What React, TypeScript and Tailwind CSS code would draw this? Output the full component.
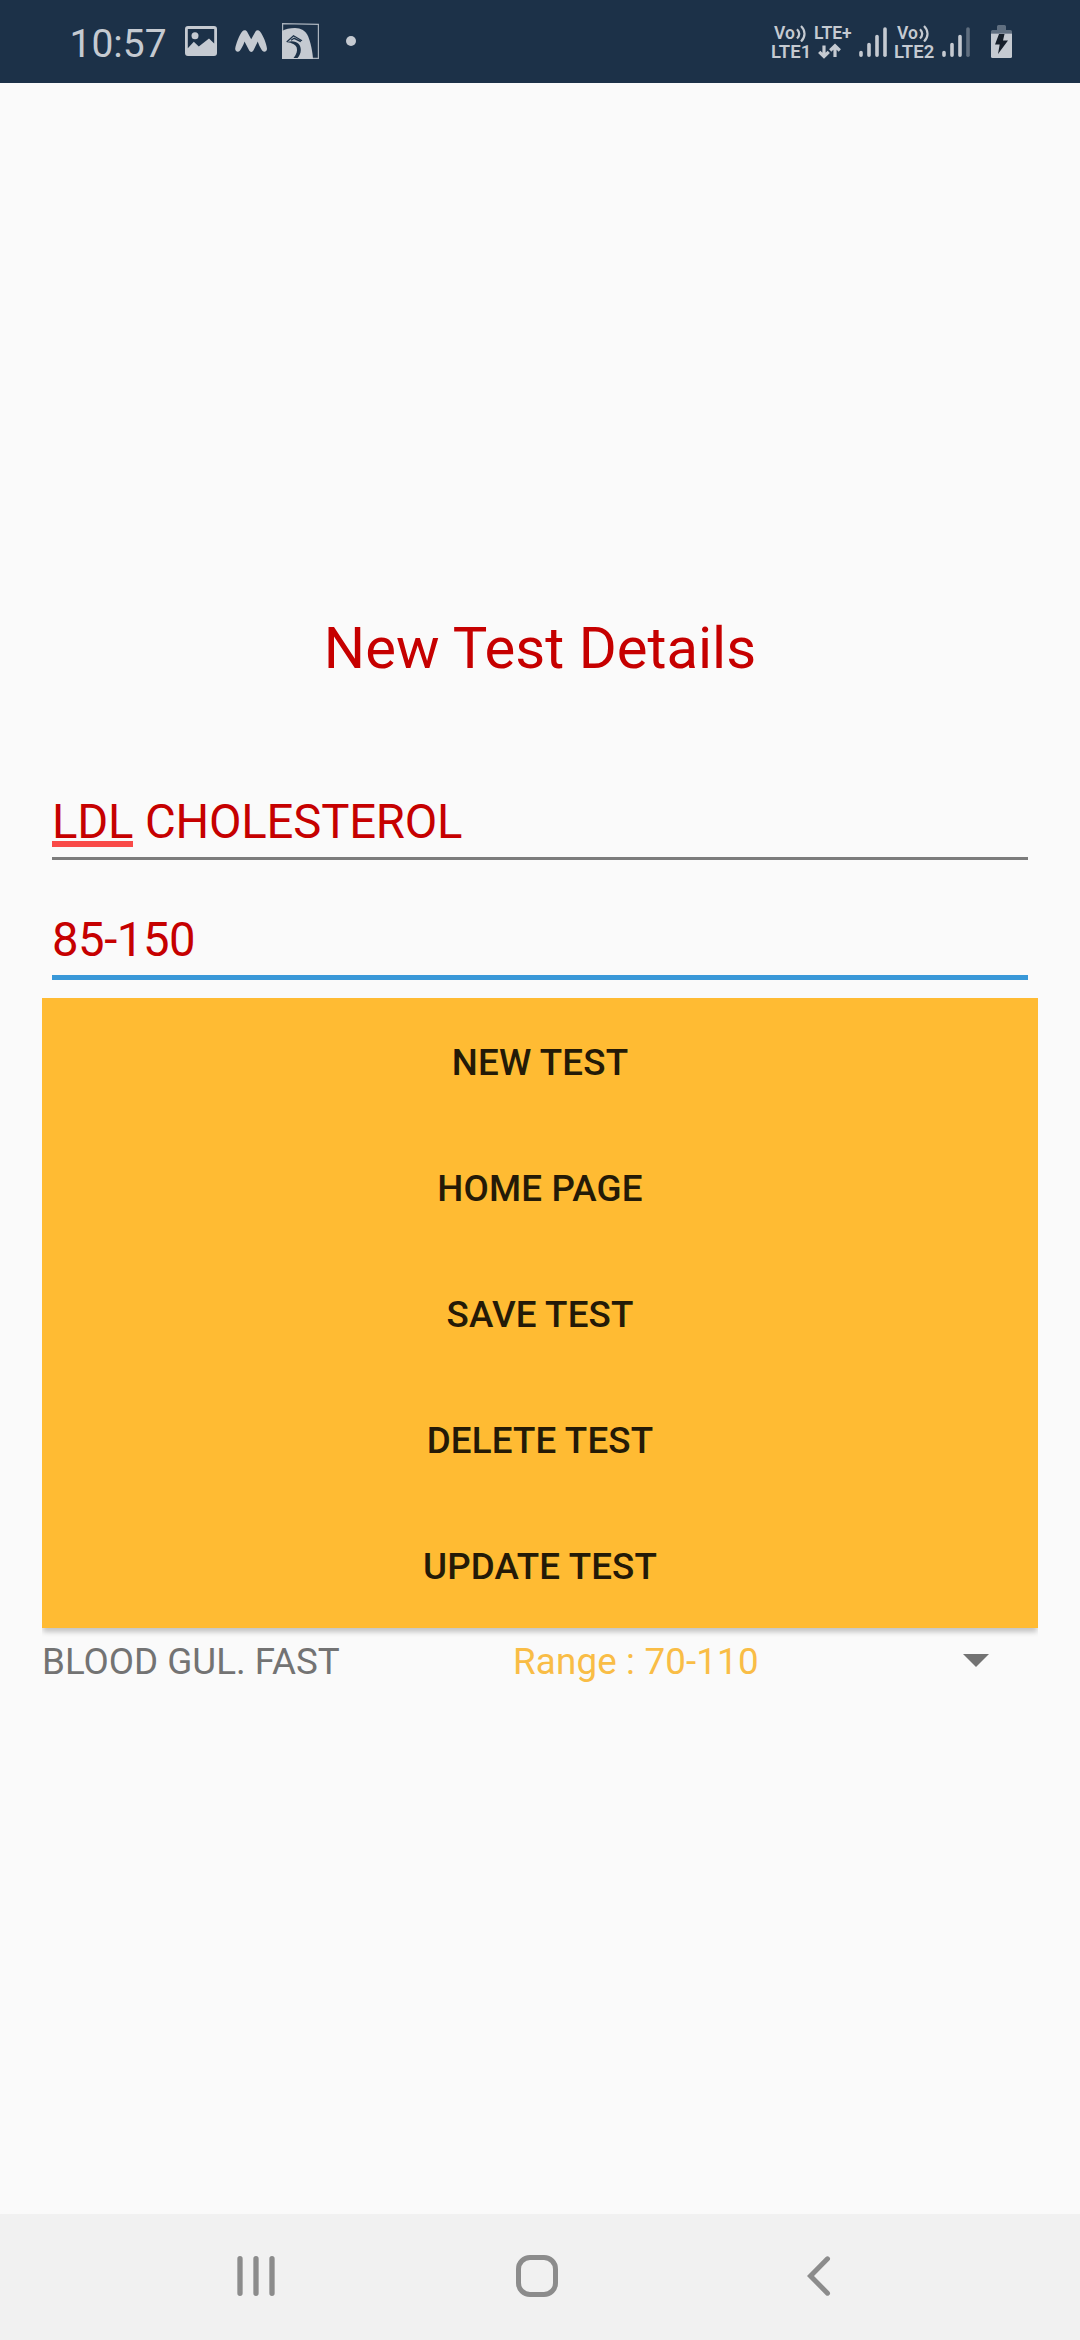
const actions = ['NEW TEST', 'HOME PAGE', 'SAVE TEST', 'DELETE TEST', 'UPDATE TEST'];

function PictureIcon() {
  return (
    <svg className="mt-[26px] ml-[19px] h-[30px] w-8 shrink-0" viewBox="0 0 32 30" fill="#c5cad1">
      <path fillRule="evenodd" d="M3 0h26a3 3 0 0 1 3 3v24a3 3 0 0 1-3 3H3a3 3 0 0 1-3-3V3a3 3 0 0 1 3-3Zm-.2 3v19.200l6-6.400 5 4.800L24 12.500l5.200 5V3Z" />
      <circle cx="10" cy="9.700" r="3.500" />
    </svg>
  );
}

function WaveIcon() {
  return (
    <svg className="mt-[30px] ml-[18px] h-[22px] w-8 shrink-0" viewBox="0 0 32 22" fill="#c5cad1">
      <path d="M.2 18.800C.8 14.500 4.300 5 7.200 1.600 8.600-.2 10.800-.2 12 1.600l4.200 7.600 4.300-7.700c1-1.700 3.200-1.700 4.500 0C28.500 6 31.600 14 32 18.800c0 2.500-2.700 3.900-4.400 2.200-1.500-1.700-4-6.300-4.800-9.500l-4.400 9.100c-.9 1.700-3.300 1.700-4.200 0L9.500 11.500C8.600 14.800 6.200 19.300 4.600 21 2.900 22.700 0 21.200.2 18.800Z" />
    </svg>
  );
}

function BirdIcon() {
  return (
    <svg className="mt-[23px] ml-[15px] h-9 w-[37px] shrink-0" viewBox="0 0 37 36" fill="none">
      <path d="M.6.600 36.400 1.300V35.400H.6Z" stroke="#aab3bd" strokeWidth="1.200" />
      <path d="M0 8C3 6.300 8 5 13 5c6 0 10.500 2.800 13 8 2.500 6 4.500 15 5 23H0Z" fill="#c5cad1" />
      <path d="M4.700 19 11.500 12.800 20 17.800M9 17.300 12.200 15.300 18.800 18.700" stroke="#1c3148" strokeWidth="1.300" />
      <path d="M5 19C13.500 16.500 19 20.500 18.800 27c-.1 3.500-1.500 6-3.300 8h-4c2.800-3.500 4.300-7 3.200-10.500C13.600 21.500 10 20 5 19Z" fill="#1c3148" />
    </svg>
  );
}

function SignalBars({ weak = false }: { weak?: boolean }) {
  return (
    <svg className="h-[30px] w-7" viewBox="0 0 28 30" stroke="#c5cad1" strokeWidth="3.600" strokeLinecap="round">
      <path d="M2 25.500v2.700M10 17.500v10.700M18 9.500v18.700" />
      <path d="M26 2v26.200" opacity={weak ? 0.4 : 1} />
    </svg>
  );
}

function VoLte({ line }: { line: string }) {
  return (
    <div className="flex flex-col">
      <div className="flex h-[18px] items-center pl-[3px] text-[17.500px] leading-[18px]">
        Vo
        <svg className="h-[18px] w-3 shrink-0" viewBox="0 0 12 18" fill="none" stroke="#c5cad1" strokeWidth="2.200">
          <path d="M2 5.200C4.800 8 4.800 11.500 2 14.600M6 2c4.700 4.500 4.700 11 0 15.500" />
        </svg>
      </div>
      <div className="mt-px h-[18px] text-[18.500px] leading-[18px]">{line}</div>
    </div>
  );
}

function StatusBar() {
  return (
    <header className="flex h-[83px] shrink-0 items-start bg-[#1c3148] text-[#c5cad1]">
      <div className="mt-[21px] ml-[69.500px] w-[96.500px] text-[39px] leading-[46px] whitespace-nowrap">10:57</div>
      <PictureIcon />
      <WaveIcon />
      <BirdIcon />
      <div className="mt-9 ml-[27px] size-2.5 rounded-full bg-[#c5cad1]" />
      <div className="mt-6 ml-auto flex w-[309px] font-semibold">
        <div className="w-[43px]"><VoLte line="LTE1" /></div>
        <div className="w-[45px]">
          <div className="h-[18px] text-[17.500px] leading-[18px]">LTE+</div>
          <svg className="mt-px ml-1 h-4 w-6" viewBox="0 0 24 16" fill="none" stroke="#c5cad1" strokeWidth="3.200">
            <path d="M6 2.500v11M1.200 8.800 6 13.500l4.800-4.700M17 14V3M12.200 7.500 17 2.800l4.800 4.700" />
          </svg>
        </div>
        <div className="mt-[3px] w-[35px]"><SignalBars /></div>
        <div className="w-[47.500px]"><VoLte line="LTE2" /></div>
        <div className="mt-[3px] w-[49.500px]"><SignalBars weak /></div>
        <svg className="mt-px h-[33px] w-[21px]" viewBox="0 0 21 33">
          <path d="M6 5V1.500Q6 0 7.500 0h6Q15 0 15 1.500V5h4.500Q21 5 21 6.500V8.500H0V6.500Q0 5 1.500 5Z" fill="#606f80" />
          <path d="M0 8.500h21v23q0 1.500-1.500 1.500h-18Q0 33 0 31.500Z" fill="#c5cad1" />
          <path d="M8 9h5.500l-1.500 6.500h5L7 29l1.700-9.500H4Z" fill="#161f2a" />
        </svg>
      </div>
    </header>
  );
}

function NavBar() {
  return (
    <nav className="flex h-[126px] shrink-0 items-start bg-[#f1f1f1] pt-[41px]">
      <svg className="mt-px ml-[237px] h-10 w-[38px]" viewBox="0 0 38 40" stroke="#8c8c8c" strokeWidth="5.300" strokeLinecap="round">
        <path d="M3 2.700v34.600M19 2.700v34.600M35 2.700v34.600" />
      </svg>
      <svg className="ml-[241px] h-[42px] w-[42px]" viewBox="0 0 42 42" fill="none" stroke="#8c8c8c" strokeWidth="5">
        <rect x="2.500" y="2.500" width="37" height="37" rx="11.500" />
      </svg>
      <svg className="mt-px ml-[249px] h-10 w-6" viewBox="0 0 24 40" fill="none" stroke="#8c8c8c" strokeWidth="5" strokeLinecap="round">
        <path d="M20.500 2.800 3.500 20l17 17.200" />
      </svg>
    </nav>
  );
}

export default function App() {
  return (
    <div className="flex h-[2340px] w-[1080px] flex-col overflow-hidden bg-[#fafafa] font-[Roboto,sans-serif]">
      <StatusBar />
      <main className="flex flex-1 flex-col px-[42px] pt-[531px]">
        <h1 className="h-[68px] text-center text-[58px] leading-[68px] whitespace-nowrap text-[#c60000]">New Test Details</h1>
        <div className="mx-[10px] mt-[111px] h-[67px] border-b-[3px] border-[#7c7c7c] pt-px text-[47.250px] leading-[56px] tracking-[-0.180px] text-[#c60000]">
          <span className="relative inline-block">
            LDL
            <span className="absolute top-[47px] left-0 h-1.5 w-full bg-[#f94a48]" />
          </span>{' '}
          CHOLESTEROL
        </div>
        <div className="mx-[10px] mt-[51px] h-[69px] border-b-[5px] border-[#3998d8] pt-px text-[47.250px] leading-[56px] tracking-[-0.450px] text-[#c60000]">85-150</div>
        <div className="mt-[18px] flex flex-col bg-[#ffbb33] shadow-[0_5px_5px_-1px_rgba(0,0,0,0.220)] [clip-path:inset(-1px_0_-14px_0)]">
          {actions.map((label) => (
            <button key={label} className="h-[126px] pt-[3px] text-[36.750px] leading-[43px] font-medium tracking-[0.140px] text-[#241a07]">
              {label}
            </button>
          ))}
        </div>
        <div className="flex h-[63px] items-start pt-3 text-[36.750px] leading-[43px]">
          <span className="w-[471px] text-[#737373]">BLOOD GUL. FAST</span>
          <span className="tracking-[0.150px] text-[#f9bd46]">Range : 70-110</span>
          <svg className="mt-[14px] mr-[49.500px] ml-auto h-[13px] w-[26px]" viewBox="0 0 26 13" fill="#737373">
            <path d="M0 0h26L13 13Z" />
          </svg>
        </div>
      </main>
      <NavBar />
    </div>
  );
}
